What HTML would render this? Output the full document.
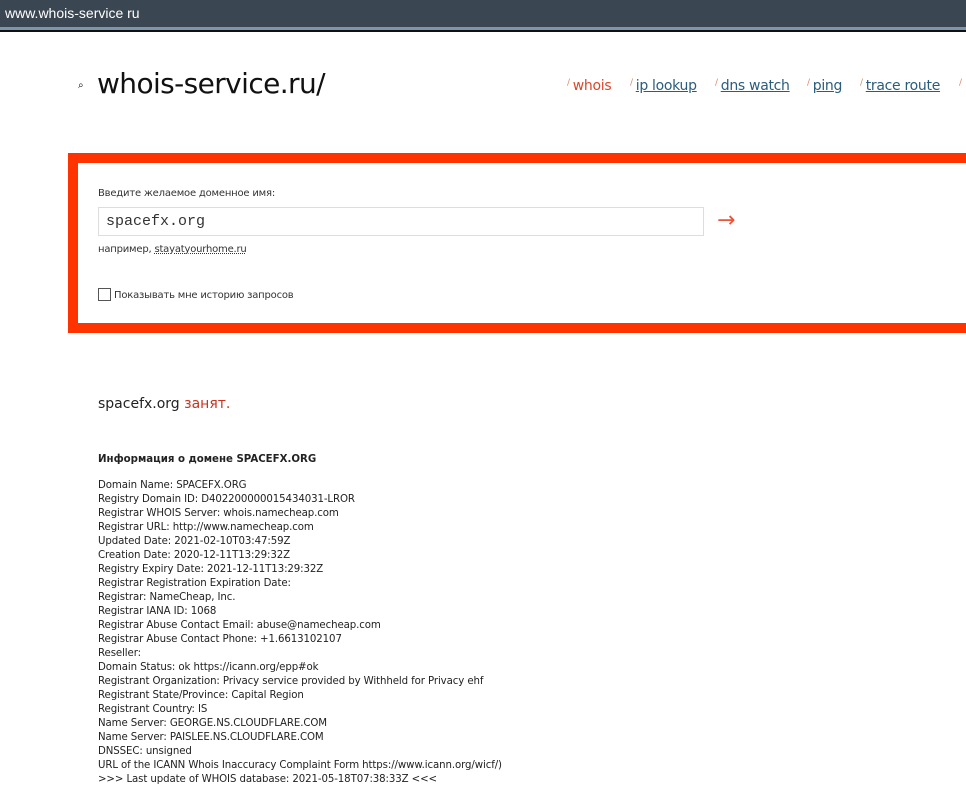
<!DOCTYPE html>
<html><head><meta charset="utf-8"><style>
body{margin:0;width:966px;height:800px;overflow:hidden;background:#fff;font-family:"DejaVu Sans","Liberation Sans",sans-serif;position:relative}
.bar{position:absolute;left:0;top:0;width:966px;height:27px;background:#3b4653;border-bottom:3px solid #7d96ab}
.bar2{position:absolute;left:0;top:30px;width:966px;height:2px;background:#111}
.url{position:absolute;left:5px;top:5px;color:#fff;font-size:14px;font-family:"Liberation Sans",sans-serif}
.abs{position:absolute;white-space:nowrap}
.logo{left:97px;top:67px;font-size:28px;color:#111;font-family:"DejaVu Sans",sans-serif;letter-spacing:-0.6px}
.nav{top:78px;font-size:14px;color:#2a5d7c;text-decoration:underline;letter-spacing:-0.3px}
.sl{color:#d98a6e;font-size:9px;text-decoration:none;display:inline-block;vertical-align:top;margin-right:3px}
.box{position:absolute;left:68px;top:153px;width:900px;height:160px;border:10px solid #ff3300;border-right:none}
.small{font-size:10px;color:#333;letter-spacing:-0.2px}
.inp{position:absolute;left:98px;top:207px;width:606px;height:29px;border:1px solid #ddd;font-family:"Liberation Mono",monospace;font-size:15px;line-height:28px;padding-left:7px;box-sizing:border-box;color:#333}
.who{left:98px;top:479px;font-size:10.2px;line-height:14px;color:#222;letter-spacing:-0.1px}
</style></head><body>
<div class="bar"></div><div class="bar2"></div>
<div class="url">www.whois-service ru</div>
<div class="abs" style="left:78px;top:80px;font-size:10px;color:#000">&#x2315;</div>
<div class="abs logo">whois-service.ru/</div>
<div class="abs nav" style="left:567px;color:#d9472a;text-decoration:none"><span class="sl">/</span>whois</div>
<div class="abs nav" style="left:630px"><span class="sl">/</span>ip lookup</div>
<div class="abs nav" style="left:715px"><span class="sl">/</span>dns watch</div>
<div class="abs nav" style="left:807px"><span class="sl">/</span>ping</div>
<div class="abs nav" style="left:860px"><span class="sl">/</span>trace route</div>
<div class="abs nav" style="left:959px"><span class="sl">/</span></div>
<div class="box"></div>
<div class="abs small" style="left:98px;top:188px">Введите желаемое доменное имя:</div>
<div class="inp">spacefx.org</div>
<div class="abs" style="left:717px;top:208px;font-size:22px;color:#e8553a">&#8594;</div>
<div class="abs small" style="left:98px;top:244px">например, <span style="text-decoration:underline dotted">stayatyourhome.ru</span></div>
<div class="abs" style="left:98px;top:288px;width:11px;height:11px;border:1px solid #555"></div>
<div class="abs small" style="left:114px;top:290px">Показывать мне историю запросов</div>
<div class="abs" style="left:98px;top:396px;font-size:14px;color:#222">spacefx.org <span style="color:#c8321e">занят.</span></div>
<div class="abs" style="left:98px;top:454px;font-size:10.2px;font-weight:bold;color:#222">Информация о домене SPACEFX.ORG</div>
<div class="abs who">Domain Name: SPACEFX.ORG<br>Registry Domain ID: D402200000015434031-LROR<br>Registrar WHOIS Server: whois.namecheap.com<br>Registrar URL: http://www.namecheap.com<br>Updated Date: 2021-02-10T03:47:59Z<br>Creation Date: 2020-12-11T13:29:32Z<br>Registry Expiry Date: 2021-12-11T13:29:32Z<br>Registrar Registration Expiration Date:<br>Registrar: NameCheap, Inc.<br>Registrar IANA ID: 1068<br>Registrar Abuse Contact Email: abuse@namecheap.com<br>Registrar Abuse Contact Phone: +1.6613102107<br>Reseller:<br>Domain Status: ok https://icann.org/epp#ok<br>Registrant Organization: Privacy service provided by Withheld for Privacy ehf<br>Registrant State/Province: Capital Region<br>Registrant Country: IS<br>Name Server: GEORGE.NS.CLOUDFLARE.COM<br>Name Server: PAISLEE.NS.CLOUDFLARE.COM<br>DNSSEC: unsigned<br>URL of the ICANN Whois Inaccuracy Complaint Form https://www.icann.org/wicf/)<br>&gt;&gt;&gt; Last update of WHOIS database: 2021-05-18T07:38:33Z &lt;&lt;&lt;</div>
</body></html>
